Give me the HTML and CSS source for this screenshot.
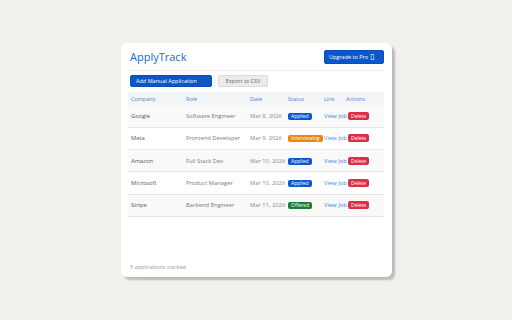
FILE: index.html
```html
<!DOCTYPE html>
<html>
<head>
<meta charset="utf-8">
<link rel="stylesheet" href="styles.css">
</head>
<body>
<div class="card">
  <div class="header">
    <h1 class="title">ApplyTrack</h1>
    <button class="btn btn-primary btn-upgrade">Upgrade to Pro <span class="lock">▯</span></button>
  </div>
  <div class="toolbar">
    <button class="btn btn-primary btn-add">Add Manual Application</button>
    <button class="btn btn-secondary btn-export">Export to CSV</button>
  </div>
  <table class="apps">
    <colgroup>
      <col class="c-company"><col class="c-role"><col class="c-date"><col class="c-status"><col class="c-link"><col class="c-actions">
    </colgroup>
    <thead>
      <tr><th>Company</th><th>Role</th><th>Date</th><th>Status</th><th>Link</th><th>Actions</th></tr>
    </thead>
    <tbody>
      <tr><td class="company">Google</td><td class="role">Software Engineer</td><td class="date">Mar 8, 2026</td><td><span class="badge applied">Applied</span></td><td><a class="link">View Job</a></td><td><button class="del">Delete</button></td></tr>
      <tr><td class="company">Meta</td><td class="role">Frontend Developer</td><td class="date">Mar 9, 2026</td><td><span class="badge interviewing">Interviewing</span></td><td><a class="link">View Job</a></td><td><button class="del">Delete</button></td></tr>
      <tr><td class="company">Amazon</td><td class="role">Full Stack Dev</td><td class="date">Mar 10, 2026</td><td><span class="badge applied">Applied</span></td><td><a class="link">View Job</a></td><td><button class="del">Delete</button></td></tr>
      <tr><td class="company">Microsoft</td><td class="role">Product Manager</td><td class="date">Mar 10, 2026</td><td><span class="badge applied">Applied</span></td><td><a class="link">View Job</a></td><td><button class="del">Delete</button></td></tr>
      <tr><td class="company">Stripe</td><td class="role">Backend Engineer</td><td class="date">Mar 11, 2026</td><td><span class="badge offered">Offered</span></td><td><a class="link">View Job</a></td><td><button class="del">Delete</button></td></tr>
    </tbody>
  </table>
  <div class="footer">5 applications tracked</div>
</div>
</body>
</html>
```
FILE: styles.css
```css
* { box-sizing: border-box; }
html, body { margin: 0; padding: 0; }
body {
  width: 512px;
  height: 320px;
  background: #f1f0ed;
  font-family: "Open Sans", "Noto Sans", sans-serif;
  padding: 43px 0 0 121px;
}
.card {
  width: 271px;
  height: 234px;
  background: #fff;
  border-radius: 6px;
  box-shadow: 3px 3px 2px rgba(0,0,0,0.22);
  padding: 0 8px 6px 7px;
  display: flex;
  flex-direction: column;
}
.header {
  display: flex;
  align-items: center;
  justify-content: space-between;
  height: 28px;
  border-bottom: 1px solid #ececec;
  padding-left: 2px;
}
.title {
  margin: 0;
  font-size: 11px;
  font-weight: 400;
  color: #1a66c9;
}
.btn {
  font-family: inherit;
  border-radius: 2px;
  padding: 0;
  cursor: pointer;
  display: flex;
  align-items: center;
}
.btn-primary {
  background: #0b57c9;
  color: #fff;
  border: 1px solid #0a4fb8;
}
.btn-upgrade {
  width: 60px;
  height: 14px;
  font-size: 5.5px;
  padding-left: 4px;
}
.lock {
  margin-left: 2px;
  font-family: "DejaVu Sans", sans-serif;
  font-size: 8px;
  line-height: 8px;
}
.toolbar {
  display: flex;
  gap: 6px;
  padding: 4px 0 0 2px;
}
.btn-add {
  width: 82px;
  height: 12px;
  font-size: 5.5px;
  padding-left: 5px;
}
.btn-secondary {
  background: #ebebeb;
  color: #666;
  border: 1px solid #dcdcdc;
}
.btn-export {
  width: 50px;
  height: 12px;
  font-size: 5.5px;
  justify-content: center;
}
.apps {
  margin-top: 5px;
  width: 256px;
  border-collapse: collapse;
  table-layout: fixed;
  font-size: 5.8px;
}
.c-company { width: 55px; }
.c-role { width: 64px; }
.c-date { width: 38px; }
.c-status { width: 36px; }
.c-link { width: 22px; }
.c-actions { width: 41px; }
.apps th {
  background: #f4f5f7;
  color: #4d86d6;
  font-weight: 400;
  text-align: left;
  height: 13px;
  padding: 0 0 0 3px;
  white-space: nowrap;
  font-size: 5.5px;
}
.apps td {
  height: 22.33px;
  padding: 0 0 0 3px;
  border-bottom: 1px solid #e6e6e6;
  white-space: nowrap;
  vertical-align: middle;
}
.apps tbody tr:nth-child(odd) td { background: #f9f9f9; }
.company { color: #555; }
.role { color: #777; }
.date { color: #8a8a8a; }
.badge {
  display: inline-block;
  color: #fff;
  font-size: 5px;
  line-height: 7px;
  padding: 0 3px;
  border-radius: 2px;
}
.applied { background: #0b57d0; }
.interviewing { background: #e8890c; }
.offered { background: #1e7d32; }
.link { color: #3f7fd6; }
.del {
  background: #dc2f45;
  color: #fff;
  border: none;
  border-radius: 2px;
  font-family: inherit;
  font-size: 5px;
  line-height: 8px;
  padding: 0 3px;
  margin-left: 2px;
}
.footer {
  margin-top: auto;
  padding-left: 2px;
  font-size: 5.5px;
  color: #999;
}
```
